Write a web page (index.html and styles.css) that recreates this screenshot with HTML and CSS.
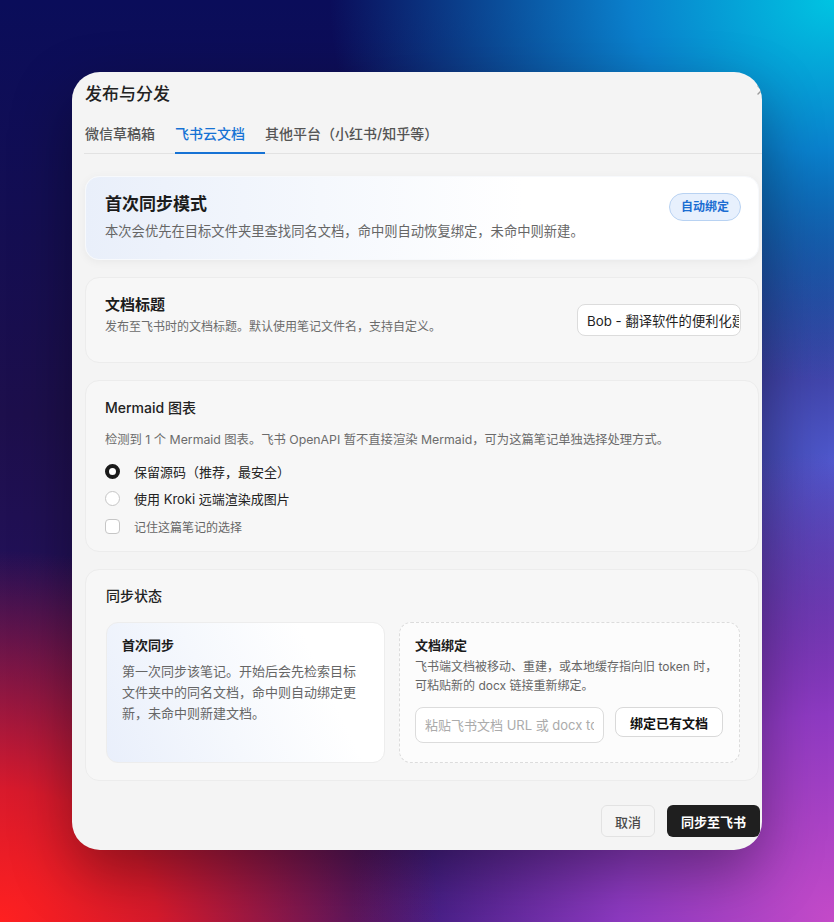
FILE: index.html
```html
<!DOCTYPE html>
<html lang="zh-CN">
<head>
<meta charset="utf-8">
<title>发布与分发</title>
<link rel="stylesheet" href="styles.css">
</head>
<body>
<div class="backdrop">
  <div class="modal">
    <svg class="close" width="12" height="12" viewBox="0 0 12 12" aria-label="关闭"><path d="M2 2 L10 10 M10 2 L2 10" stroke="#9a9a9a" stroke-width="1.4" stroke-linecap="round" fill="none"/></svg>
    <h1 class="modal-title">发布与分发</h1>
    <nav class="tabs">
      <span class="tab">微信草稿箱</span>
      <span class="tab active">飞书云文档</span>
      <span class="tab">其他平台（小红书/知乎等）</span>
    </nav>
    <div class="content">
      <section class="card card-mode">
        <div>
          <h2 class="mode-title">首次同步模式</h2>
          <p class="mode-desc">本次会优先在目标文件夹里查找同名文档，命中则自动恢复绑定，未命中则新建。</p>
        </div>
        <span class="badge">自动绑定</span>
      </section>

      <section class="card card-field">
        <div>
          <h3 class="field-title">文档标题</h3>
          <p class="field-desc">发布至飞书时的文档标题。默认使用笔记文件名，支持自定义。</p>
        </div>
        <input class="title-input" type="text" value="Bob - 翻译软件的便利化建设">
      </section>

      <section class="card card-mermaid">
        <h3 class="section-title">Mermaid 图表</h3>
        <p class="mermaid-desc">检测到 1 个 Mermaid 图表。飞书 OpenAPI 暂不直接渲染 Mermaid，可为这篇笔记单独选择处理方式。</p>
        <div class="options">
          <label class="option"><span class="radio checked"></span>保留源码（推荐，最安全）</label>
          <label class="option option-2"><span class="radio"></span>使用 Kroki 远端渲染成图片</label>
          <label class="option option-3 muted"><span class="checkbox"></span>记住这篇笔记的选择</label>
        </div>
      </section>

      <section class="card card-sync">
        <h3 class="section-title">同步状态</h3>
        <div class="sync-grid">
          <div class="sub sub-first">
            <h4 class="sub-title">首次同步</h4>
            <p class="sub-desc">第一次同步该笔记。开始后会先检索目标<br>文件夹中的同名文档，命中则自动绑定更<br>新，未命中则新建文档。</p>
          </div>
          <div class="sub sub-bind">
            <h4 class="sub-title">文档绑定</h4>
            <p class="bind-desc">飞书端文档被移动、重建，或本地缓存指向旧 token 时，<br>可粘贴新的 docx 链接重新绑定。</p>
            <div class="bind-row">
              <input class="bind-input" type="text" placeholder="粘贴飞书文档 URL 或 docx token">
              <button class="btn-bind">绑定已有文档</button>
            </div>
          </div>
        </div>
      </section>
    </div>
    <footer class="footer">
      <button class="btn-cancel">取消</button>
      <button class="btn-primary">同步至飞书</button>
    </footer>
  </div>
</div>
</body>
</html>
```

FILE: styles.css
```css
html, body {
  margin: 0;
  padding: 0;
}

body {
  width: 834px;
  height: 922px;
  overflow: hidden;
  font-family: "Inter", "Noto Sans CJK SC", sans-serif;
  background-color: #140b40;
  background-image:
    radial-gradient(110% 75% at 100% 0%, #00c4e2 0%, #0a80cc 22%, rgba(30, 50, 160, 0) 55%),
    radial-gradient(85% 65% at 0% 100%, #ff2020 0%, #d81a2c 22%, rgba(110, 20, 60, 0) 62%),
    radial-gradient(85% 75% at 100% 100%, #c44ac8 0%, #8e3ac2 30%, rgba(70, 40, 170, 0) 68%),
    radial-gradient(60% 50% at 100% 50%, #4e58cc 0%, rgba(70, 80, 200, 0) 70%),
    linear-gradient(180deg, #0a0d5a 0%, #1d0f4c 45%, #2c1470 100%);
}

.backdrop {
  box-sizing: border-box;
  height: 922px;
  padding: 72px 0 0 72px;
}

.modal {
  position: relative;
  box-sizing: border-box;
  width: 690px;
  height: 778px;
  padding: 10px 0 0 12px;
  background: #f4f4f4;
  border-radius: 28px;
  overflow: hidden;
  box-shadow: 0 24px 60px rgba(0, 0, 0, 0.35);
  display: flex;
  flex-direction: column;
  color: #1f1f1f;
}

.close {
  position: absolute;
  top: 12px;
  right: -6px;
}

.modal-title {
  margin: 0 0 8px 1px;
  font-size: 17px;
  line-height: 24px;
  font-weight: 500;
  color: #222;
}

.tabs {
  display: flex;
  border-bottom: 1px solid #e2e2e2;
}

.tab {
  padding: 10px 20px 8px 0;
  margin-bottom: -1px;
  font-size: 14px;
  line-height: 20px;
  font-weight: 500;
  color: #555;
  border-bottom: 2px solid transparent;
}

.tab:first-child {
  padding-left: 1px;
}

.tab.active {
  color: #1672d4;
  border-bottom-color: #1672d4;
}

.content {
  padding: 22px 3px 0 1px;
  display: flex;
  flex-direction: column;
  gap: 17px;
}

.card {
  border-radius: 14px;
  background: #f7f7f7;
  border: 1px solid #ececec;
}

h1, h2, h3, h4, p {
  margin: 0;
}

/* card 1 */
.card-mode {
  display: flex;
  justify-content: space-between;
  align-items: flex-start;
  padding: 15px 17px 18px 19px;
  background: linear-gradient(90deg, #e9effa 0%, #f5f8fd 35%, #ffffff 65%);
  border-color: #f7f9fc;
  box-shadow: 0 2px 10px rgba(0, 0, 0, 0.05);
}

.mode-title {
  font-size: 17px;
  line-height: 24px;
  font-weight: 700;
  color: #1c1c1c;
}

.mode-desc {
  margin-top: 5px;
  font-size: 13.3px;
  line-height: 20px;
  color: #666;
}

.badge {
  margin-top: 1px;
  padding: 0 11px;
  line-height: 26px;
  border: 1px solid #b8d2f2;
  background: #e7f0fd;
  border-radius: 14px;
  font-size: 12px;
  font-weight: 600;
  color: #1a6dd2;
  white-space: nowrap;
}

/* card 2 */
.card-field {
  display: flex;
  justify-content: space-between;
  align-items: flex-start;
  padding: 16px 17px 26px 19px;
}

.field-title {
  font-size: 15px;
  line-height: 22px;
  font-weight: 700;
  color: #1c1c1c;
}

.field-desc {
  margin-top: 2px;
  font-size: 12px;
  line-height: 18px;
  color: #6b6b6b;
}

.title-input {
  box-sizing: border-box;
  margin-top: 10px;
  width: 164px;
  height: 32px;
  padding: 0 1px 0 9px;
  border: 1px solid #dcdcdc;
  border-radius: 8px;
  background: #fff;
  font-family: inherit;
  font-size: 13.3px;
  color: #1f1f1f;
  outline: none;
}

/* card 3 */
.card-mermaid {
  padding: 17px 17px 13px 19px;
}

.section-title {
  font-size: 14px;
  line-height: 20px;
  font-weight: 500;
  color: #222;
}

.mermaid-desc {
  margin-top: 13px;
  font-size: 12.3px;
  line-height: 18px;
  color: #6b6b6b;
}

.options {
  margin-top: 10px;
  display: flex;
  flex-direction: column;
}

.option {
  display: flex;
  align-items: center;
  gap: 14px;
  height: 24px;
  font-size: 13px;
  color: #222;
}

.option-2 {
  margin-top: 3px;
}

.option-3 {
  margin-top: 4px;
}

.option.muted {
  font-size: 12px;
  color: #666;
}

.radio {
  box-sizing: border-box;
  flex: none;
  width: 15px;
  height: 15px;
  border-radius: 50%;
  border: 1px solid #c6c6c6;
  background: #fff;
}

.radio.checked {
  border: 4.5px solid #1a1a1a;
}

.checkbox {
  box-sizing: border-box;
  flex: none;
  width: 15px;
  height: 15px;
  border-radius: 4px;
  border: 1px solid #c6c6c6;
  background: #fff;
}

/* card 4 */
.card-sync {
  padding: 16px 18px 17px 20px;
}

.sync-grid {
  margin-top: 16px;
  display: grid;
  grid-template-columns: 279px 1fr;
  gap: 14px;
}

.sub {
  box-sizing: border-box;
  height: 141px;
  border-radius: 12px;
}

.sub-first {
  padding: 12px 15px 0 15px;
  border: 1px solid #ededed;
  background: linear-gradient(65deg, #e9effb 0%, #f5f8fd 40%, #ffffff 75%);
}

.sub-bind {
  padding: 12px 16px 0 15px;
  border: 1px dashed #dcdcdc;
  background: #fcfcfc;
}

.sub-title {
  font-size: 13px;
  line-height: 20px;
  font-weight: 700;
  color: #1c1c1c;
}

.sub-desc {
  margin-top: 6px;
  font-size: 13px;
  line-height: 21px;
  color: #666;
}

.bind-desc {
  margin-top: 2px;
  font-size: 12px;
  line-height: 19px;
  color: #666;
  white-space: nowrap;
}

.bind-row {
  margin-top: 12px;
  display: flex;
  align-items: flex-start;
  gap: 11px;
}

.bind-input {
  box-sizing: border-box;
  flex: 1;
  min-width: 0;
  height: 36px;
  padding: 0 9px;
  border: 1px solid #dcdcdc;
  border-radius: 8px;
  background: #fff;
  font-family: inherit;
  font-size: 13px;
  outline: none;
}

.bind-input::placeholder {
  color: #ababab;
}

.btn-bind {
  flex: none;
  height: 30px;
  padding: 0 14px;
  border: 1px solid #d9d9d9;
  border-radius: 8px;
  background: #fff;
  font-family: inherit;
  font-size: 13px;
  font-weight: 600;
  color: #111;
}

/* footer */
.footer {
  margin-top: 24px;
  padding-right: 2px;
  display: flex;
  justify-content: flex-end;
  gap: 12px;
}

.btn-cancel {
  height: 32px;
  padding: 0 13px;
  border: 1px solid #e2e2e2;
  border-radius: 6px;
  background: #f5f5f5;
  font-family: inherit;
  font-size: 13px;
  font-weight: 500;
  color: #4a4a4a;
}

.btn-primary {
  height: 32px;
  padding: 0 14px;
  border: none;
  border-radius: 6px;
  background: #1f1f1f;
  font-family: inherit;
  font-size: 13px;
  font-weight: 600;
  color: #fff;
}
```
